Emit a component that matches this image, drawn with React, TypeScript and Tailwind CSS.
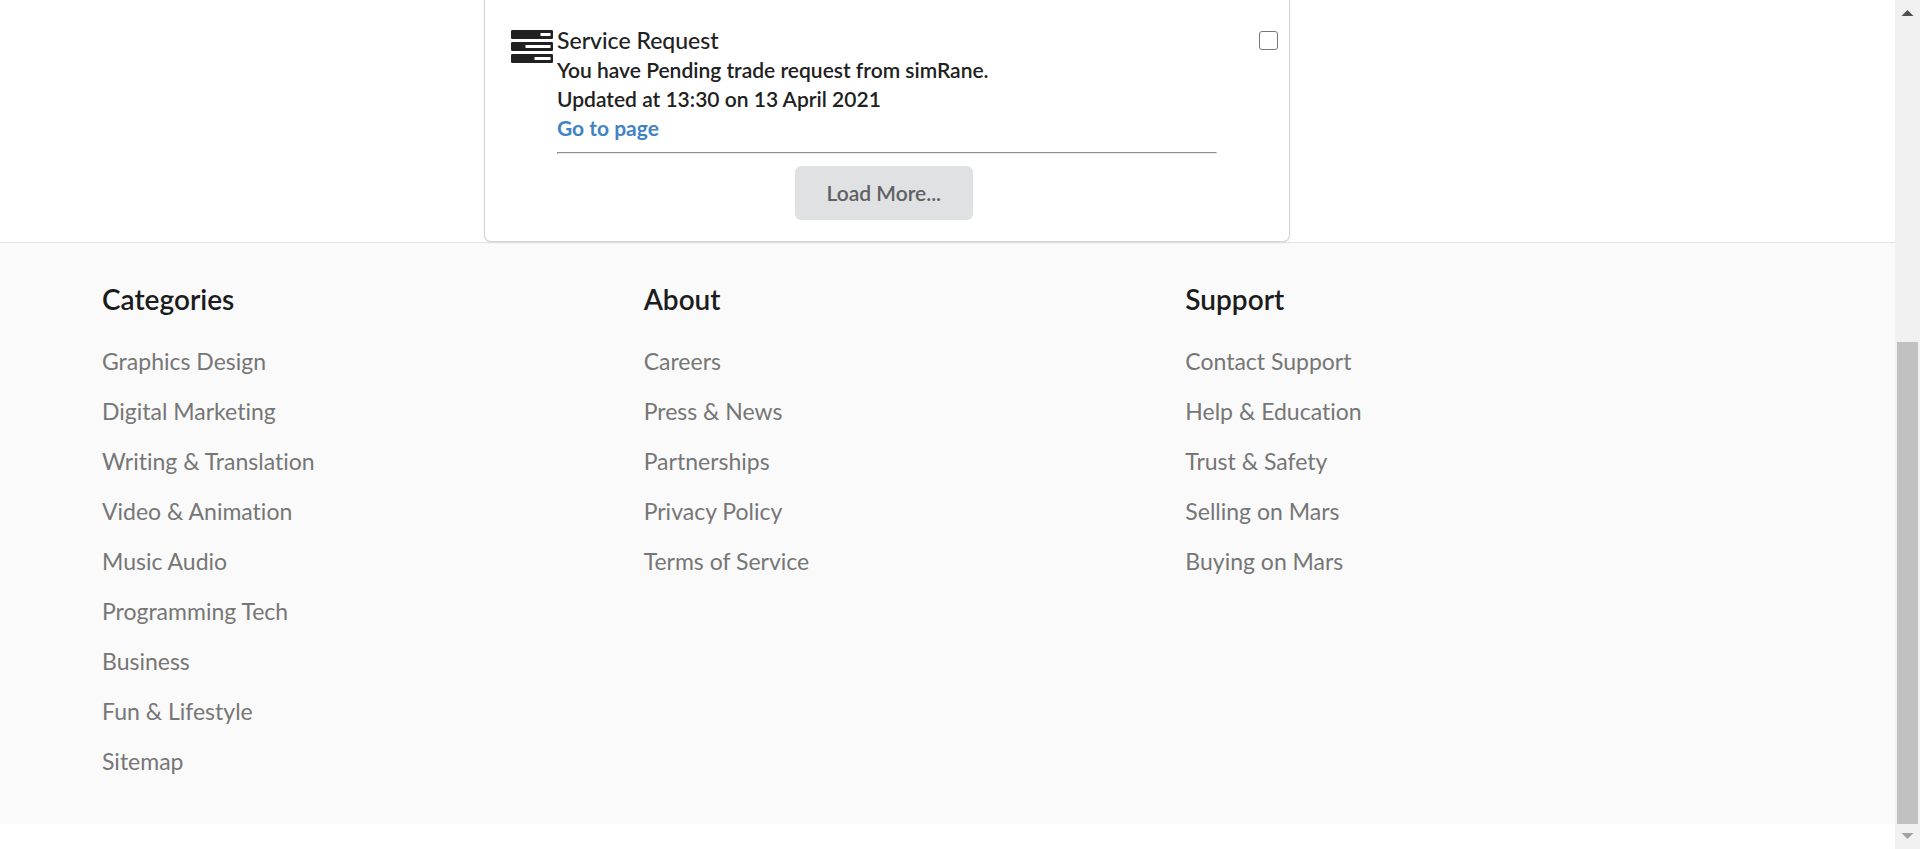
import React from "react";

type FooterColumn = { title: string; links: string[] };

const columns: FooterColumn[] = [
  {
    title: "Categories",
    links: [
      "Graphics Design",
      "Digital Marketing",
      "Writing & Translation",
      "Video & Animation",
      "Music Audio",
      "Programming Tech",
      "Business",
      "Fun & Lifestyle",
      "Sitemap",
    ],
  },
  {
    title: "About",
    links: ["Careers", "Press & News", "Partnerships", "Privacy Policy", "Terms of Service"],
  },
  {
    title: "Support",
    links: ["Contact Support", "Help & Education", "Trust & Safety", "Selling on Mars", "Buying on Mars"],
  },
];

function TasksIcon() {
  return (
    <svg viewBox="0 0 42 33" className="h-[33px] w-[42px] shrink-0" fill="#212121" aria-hidden="true">
      <rect x="0" y="0" width="42" height="9" rx="1.3" />
      <rect x="0" y="12" width="42" height="9" rx="1.3" />
      <rect x="0" y="24" width="42" height="9" rx="1.3" />
      <g fill="#fff">
        <rect x="29.5" y="3" width="10" height="3" />
        <rect x="14.5" y="15" width="25" height="3" />
        <rect x="23.5" y="27" width="16" height="3" />
      </g>
    </svg>
  );
}

function Notification() {
  return (
    <article className="flex items-start pr-[11px] pl-[26px]">
      <div className="mt-1">
        <TasksIcon />
      </div>
      <div className="mr-[42px] ml-1 flex-1 text-[21px] leading-[29px] font-semibold text-[#212121]">
        <label htmlFor="service-request" className="block text-[23px] font-medium">
          Service Request
        </label>
        <p>You have Pending trade request from simRane.</p>
        <p>Updated at 13:30 on 13 April 2021</p>
        <a href="#request" className="block font-bold text-[#4183c4]">
          Go to page
        </a>
        <hr className="mt-2.5 h-0.5 border border-t-[#8c8c8c] border-r-[#eee] border-b-[#eee] border-l-[#8c8c8c]" />
      </div>
      <input
        id="service-request"
        type="checkbox"
        className="mt-[5px] size-[19px] appearance-none rounded-[3px] border border-[#767676] bg-white"
      />
    </article>
  );
}

function Footer() {
  return (
    <footer className="border-t border-[#e4e4e5] bg-[#fafafa] pt-[38px] pr-[168px] pb-[38px] pl-[102px]">
      <div className="grid grid-cols-3">
        {columns.map((column) => (
          <nav key={column.title} aria-label={column.title}>
            <h2 className="mb-[19px] text-[28px] leading-[36px] font-semibold text-[#1b1c1d]">{column.title}</h2>
            <ul className="text-[23px] leading-[50px] text-[#767676]">
              {column.links.map((link) => (
                <li key={link}>
                  <a href="#footer">{link}</a>
                </li>
              ))}
            </ul>
          </nav>
        ))}
      </div>
    </footer>
  );
}

function ScrollTrack() {
  return (
    <div className="flex w-[25px] shrink-0 flex-col items-center bg-[#f1f1f1]" aria-hidden="true">
      <svg viewBox="0 0 25 25" className="size-[25px]" fill="#505050">
        <path d="M6.5 16 12.5 10 18.5 16Z" />
      </svg>
      <div className="mt-[317px] w-[21px] flex-1 bg-[#c1c1c1]" />
      <svg viewBox="0 0 25 25" className="size-[25px]" fill="#a3a3a3">
        <path d="M6.5 9 12.5 15 18.5 9Z" />
      </svg>
    </div>
  );
}

export default function App() {
  return (
    <div className="flex min-h-screen bg-white font-['Lato',sans-serif] [font-variant-ligatures:none]">
      <div className="min-w-0 flex-1">
        <main className="flex pr-[32%] pl-[485px]">
          <section className="relative mb-px flex-1 rounded-b-[6px] bg-white pt-[26px] pb-[21px] shadow-[0_1px_3px_0_#d4d4d5,0_0_0_1px_#d4d4d5]">
            <Notification />
            <div className="mt-3 flex justify-center pr-1.5">
              <button
                type="button"
                className="rounded-[6px] bg-[#e0e1e2] px-8 py-3 text-[21px] leading-[30px] font-semibold text-[#5f6061]"
              >
                Load More...
              </button>
            </div>
          </section>
        </main>
        <Footer />
      </div>
      <ScrollTrack />
    </div>
  );
}
